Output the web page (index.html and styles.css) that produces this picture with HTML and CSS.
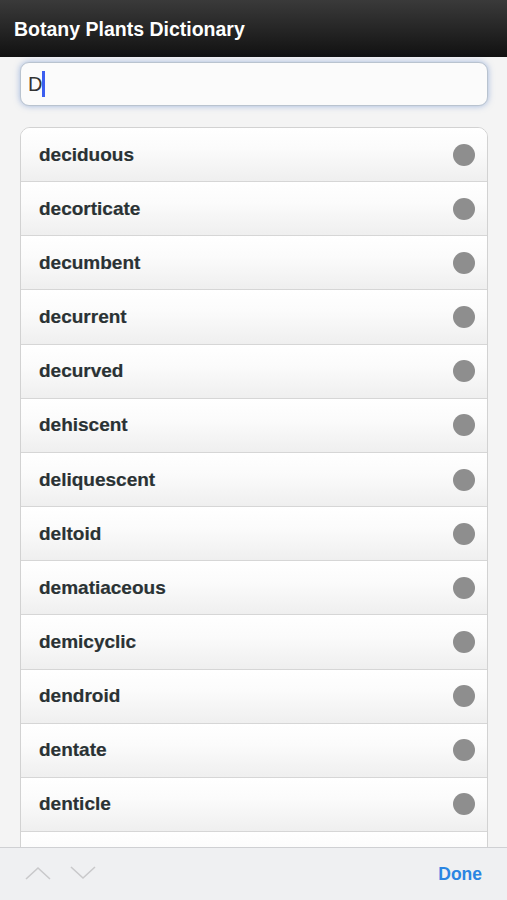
FILE: index.html
```html
<!DOCTYPE html>
<html lang="en">
<head>
    <meta charset="UTF-8">
    <meta name="viewport" content="width=device-width, initial-scale=1.0">
    <title>Botany Plants Dictionary</title>
    <link rel="stylesheet" href="styles.css">
</head>
<body>
    <header class="topbar">
        <h1>Botany Plants Dictionary</h1>
    </header>

    <div class="search">
        <div class="search-box">
            <span class="search-text">D</span><span class="caret"></span>
        </div>
    </div>

    <ul class="term-list">
        <li><span>deciduous</span><i class="dot"></i></li>
        <li><span>decorticate</span><i class="dot"></i></li>
        <li><span>decumbent</span><i class="dot"></i></li>
        <li><span>decurrent</span><i class="dot"></i></li>
        <li><span>decurved</span><i class="dot"></i></li>
        <li><span>dehiscent</span><i class="dot"></i></li>
        <li><span>deliquescent</span><i class="dot"></i></li>
        <li><span>deltoid</span><i class="dot"></i></li>
        <li><span>dematiaceous</span><i class="dot"></i></li>
        <li><span>demicyclic</span><i class="dot"></i></li>
        <li><span>dendroid</span><i class="dot"></i></li>
        <li><span>dentate</span><i class="dot"></i></li>
        <li><span>denticle</span><i class="dot"></i></li>
        <li><span>denticulate</span><i class="dot"></i></li>
    </ul>

    <footer class="keybar">
        <div class="arrows">
            <svg width="26" height="16" viewBox="0 0 26 16"><polyline points="1,14 13,3 25,14" /></svg>
            <svg width="26" height="16" viewBox="0 0 26 16"><polyline points="1,2 13,13 25,2" /></svg>
        </div>
        <span class="done">Done</span>
    </footer>
</body>
</html>
```

FILE: styles.css
```css
html, body {
    margin: 0;
    padding: 0;
}
body {
    font-family: "Liberation Sans", Arial, sans-serif;
    background-color: #f4f4f4;
    height: 900px;
    overflow: hidden;
    position: relative;
}
.topbar {
    height: 57px;
    background: linear-gradient(#3a3a3a, #262626 50%, #111111);
    display: flex;
    align-items: center;
    padding: 0 14px;
}
.topbar h1 {
    margin: 0;
    color: #ffffff;
    font-size: 19.5px;
    font-weight: bold;
    position: relative;
    top: 1px;
}
.search {
    padding: 5px 19px 0 20px;
}
.search-box {
    height: 42px;
    border: 1px solid #b9c3cf;
    border-radius: 9px;
    background: #fbfbfb;
    box-shadow: 0 0 6px rgba(90, 130, 200, 0.55);
    display: flex;
    align-items: center;
    padding: 0 7px;
}
.search-text {
    font-size: 20px;
    color: #333333;
}
.caret {
    width: 3px;
    height: 26px;
    background: #3c5ef0;
}
.term-list {
    list-style: none;
    margin: 21px 19px 0 20px;
    padding: 0;
    border: 1px solid #d2d2d2;
    border-radius: 10px;
    overflow: hidden;
    background: #ffffff;
}
.term-list li {
    height: 53.17px;
    border-bottom: 1px solid #d6d6d6;
    background: linear-gradient(#ffffff, #fbfbfb 40%, #efefef);
    display: flex;
    align-items: center;
    justify-content: space-between;
    padding: 0 12px 0 18px;
}
.term-list li span {
    font-size: 19px;
    font-weight: bold;
    color: #2a3234;
    -webkit-text-stroke: 0.2px #2a3234;
}
.dot {
    width: 22px;
    height: 22px;
    border-radius: 50%;
    background: #8e8e8e;
}
.keybar {
    position: absolute;
    left: 0;
    right: 0;
    top: 847px;
    height: 53px;
    background: #eff0f2;
    border-top: 1px solid #cfd0d3;
    display: flex;
    align-items: center;
    justify-content: space-between;
    padding: 0 25px;
    box-sizing: border-box;
}
.arrows {
    display: flex;
    gap: 19px;
    padding-bottom: 2px;
}
.arrows polyline {
    fill: none;
    stroke: #c9c9cb;
    stroke-width: 1.6;
}
.done {
    color: #2a85e2;
    font-size: 17.5px;
    font-weight: bold;
}
```
